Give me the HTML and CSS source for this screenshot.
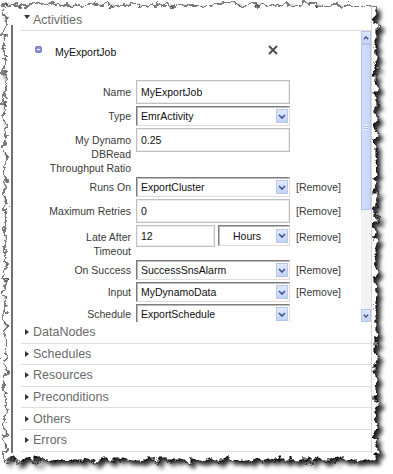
FILE: index.html
```html
<html>

<head>
  <meta name="description" content="Pipeline editor" />
  <link rel="stylesheet" href="styles.css">
</head>

<body>
  <div class="sheet">
    <svg class="paper" width="393" height="474" viewBox="0 0 393 474">
      <defs>
        <filter id="torn" x="-4%" y="-4%" width="110%" height="110%">
          <feTurbulence type="fractalNoise" baseFrequency="0.13" numOctaves="5" seed="11" result="noise" />
          <feDisplacementMap in="SourceGraphic" in2="noise" scale="13" xChannelSelector="R" yChannelSelector="G" result="paper" />
          <feGaussianBlur in="paper" stdDeviation="2" result="blur" />
          <feOffset in="blur" dx="4" dy="4" result="off" />
          <feFlood flood-color="#000" flood-opacity="0.85" />
          <feComposite in2="off" operator="in" result="shadow" />
          <feMerge>
            <feMergeNode in="shadow" />
            <feMergeNode in="paper" />
          </feMerge>
        </filter>
      </defs>
      <rect x="5" y="5" width="371" height="455" fill="#fff" stroke="#000" stroke-width="1" filter="url(#torn)" />
    </svg>

    <div class="window">
      <div class="group-head"><span class="tri-down"></span>Activities</div>

      <div class="scroller">
        <div class="scroll-content">
          <div class="job-head">
            <span class="collapse-icon"></span>
            <span class="job-name">MyExportJob</span>
            <svg class="close" width="10" height="10" viewBox="0 0 10 10">
              <path d="M1 1 L9 9 M9 1 L1 9" stroke="#4b4b4b" stroke-width="1.8" fill="none" />
            </svg>
          </div>

          <div class="form">
            <div class="row text">
              <div class="label">Name</div>
              <input class="input" type="text" value="MyExportJob">
            </div>
            <div class="row">
              <div class="label">Type</div>
              <div class="select"><span>EmrActivity</span><span class="drop"><svg width="8" height="5" viewBox="0 0 8 5"><path d="M1 1 L4 4 L7 1" stroke="#3d5283" stroke-width="1.6" fill="none" /></svg></span></div>
            </div>
            <div class="row text">
              <div class="label">My Dynamo<br>DBRead<br>Throughput Ratio</div>
              <input class="input" type="text" value="0.25">
            </div>
            <div class="row">
              <div class="label">Runs On</div>
              <div class="select"><span>ExportCluster</span><span class="drop"><svg width="8" height="5" viewBox="0 0 8 5"><path d="M1 1 L4 4 L7 1" stroke="#3d5283" stroke-width="1.6" fill="none" /></svg></span></div>
              <div class="remove">[Remove]</div>
            </div>
            <div class="row text">
              <div class="label">Maximum Retries</div>
              <input class="input" type="text" value="0">
              <div class="remove">[Remove]</div>
            </div>
            <div class="row text">
              <div class="label">Late After<br>Timeout</div>
              <input class="input short" type="text" value="12">
              <div class="select units"><span>Hours</span><span class="drop"><svg width="8" height="5" viewBox="0 0 8 5"><path d="M1 1 L4 4 L7 1" stroke="#3d5283" stroke-width="1.6" fill="none" /></svg></span></div>
              <div class="remove">[Remove]</div>
            </div>
            <div class="row">
              <div class="label">On Success</div>
              <div class="select"><span>SuccessSnsAlarm</span><span class="drop"><svg width="8" height="5" viewBox="0 0 8 5"><path d="M1 1 L4 4 L7 1" stroke="#3d5283" stroke-width="1.6" fill="none" /></svg></span></div>
              <div class="remove">[Remove]</div>
            </div>
            <div class="row">
              <div class="label">Input</div>
              <div class="select"><span>MyDynamoData</span><span class="drop"><svg width="8" height="5" viewBox="0 0 8 5"><path d="M1 1 L4 4 L7 1" stroke="#3d5283" stroke-width="1.6" fill="none" /></svg></span></div>
              <div class="remove">[Remove]</div>
            </div>
            <div class="row">
              <div class="label">Schedule</div>
              <div class="select"><span>ExportSchedule</span><span class="drop"><svg width="8" height="5" viewBox="0 0 8 5"><path d="M1 1 L4 4 L7 1" stroke="#3d5283" stroke-width="1.6" fill="none" /></svg></span></div>
            </div>
          </div>
        </div>

        <div class="scrollbar">
          <div class="sb-btn"><svg width="6" height="4" viewBox="0 0 6 4"><path d="M0.8 3.2 L3 1 L5.2 3.2" stroke="#3d5283" stroke-width="1.3" fill="none" /></svg></div>
          <div class="sb-thumb"><span class="grip"></span></div>
          <div class="sb-track"></div>
          <div class="sb-btn"><svg width="6" height="4" viewBox="0 0 6 4"><path d="M0.8 0.8 L3 3 L5.2 0.8" stroke="#3d5283" stroke-width="1.3" fill="none" /></svg></div>
        </div>
      </div>

      <div class="group"><span class="tri-right"></span>DataNodes</div>
      <div class="group"><span class="tri-right"></span>Schedules</div>
      <div class="group"><span class="tri-right"></span>Resources</div>
      <div class="group"><span class="tri-right"></span>Preconditions</div>
      <div class="group"><span class="tri-right"></span>Others</div>
      <div class="group"><span class="tri-right"></span>Errors</div>
    </div>
  </div>
</body>

</html>
```

FILE: styles.css
```css
body {
  margin: 0;
  background: #fff;
  font-family: "Liberation Sans", Arial, sans-serif;
}

.sheet {
  position: relative;
  width: 393px;
  height: 474px;
  overflow: hidden;
}

.paper {
  position: absolute;
  left: 0;
  top: 0;
}

.window {
  position: relative;
  margin: 5px 0 0 11px;
  width: 358px;
  height: 448px;
  padding-left: 2px;
  border-right: 1px solid #d6d6d6;
  background: linear-gradient(#707070, #707070) 0 20px / 2px 428px no-repeat;
}

/* section headers */
.group-head {
  margin-left: 8px;
  height: 20px;
  padding-top: 5px;
  border-bottom: 1px solid #dcdcdc;
  display: flex;
  align-items: center;
  font-size: 12.5px;
  color: #6b6b6b;
}

.tri-down {
  align-self: flex-start;
  margin: 5px 3px 0 3px;
  width: 0;
  height: 0;
  border-top: 4px solid #333;
  border-left: 3px solid transparent;
  border-right: 3px solid transparent;
}

.group {
  margin-left: 8px;
  height: 20.6px;
  border-bottom: 1px solid #dedede;
  display: flex;
  align-items: center;
  padding-left: 4px;
  font-size: 12.5px;
  color: #6b6b6b;
}

.tri-right {
  width: 0;
  height: 0;
  margin-right: 4px;
  border-left: 4px solid #333;
  border-top: 3.5px solid transparent;
  border-bottom: 3.5px solid transparent;
}

/* scrolling activity panel */
.scroller {
  margin-left: 8px;
  height: 291px;
  display: flex;
}

.scroll-content {
  flex: 1;
  overflow: hidden;
}

.job-head {
  margin-top: 11px;
  height: 16px;
  display: flex;
  align-items: center;
  padding-right: 83px;
}

.collapse-icon {
  position: relative;
  margin-left: 14px;
  margin-top: -2px;
  width: 7px;
  height: 7px;
  border-radius: 3px;
  background: #8e93d8;
  box-shadow: inset 0 0 0 1px #7a80c8;
}

.collapse-icon::after {
  content: "";
  position: absolute;
  left: 2px;
  top: 3px;
  width: 3px;
  height: 1px;
  background: #fff;
}

.job-name {
  margin-left: 13px;
  padding-top: 4px;
  font-size: 10.5px;
  color: #111;
}

.close {
  margin-left: auto;
}

.form {
  margin-top: 22px;
}

.row {
  display: flex;
  align-items: flex-start;
  margin-bottom: 2px;
  font-size: 10.5px;
  color: #3a3a3a;
}

.label {
  flex-shrink: 0;
  width: 110px;
  padding-right: 5px;
  padding-top: 3px;
  text-align: right;
  line-height: 14px;
}

.row.text .label {
  padding-top: 5px;
}

.input {
  box-sizing: border-box;
  width: 154px;
  height: 24px;
  margin: 0;
  padding: 0 4px;
  border: 1px solid #c0c0c0;
  box-shadow: inset 0 0 0 1px #ededed;
  font-family: inherit;
  font-size: 10.5px;
  color: #111;
  background: #fff;
  outline: none;
}

.input.short {
  width: 79px;
  height: 22px;
  margin-right: 3px;
}

.select {
  box-sizing: border-box;
  width: 154px;
  height: 20px;
  padding-left: 4px;
  display: flex;
  align-items: center;
  justify-content: space-between;
  border: 1px solid;
  border-color: #7c7c7c #dcdcdc #dcdcdc #7c7c7c;
  box-shadow: inset 1px 1px 0 #bdbdbd;
  color: #111;
  background: #fff;
}

.select.units {
  width: 72px;
  height: 21px;
  padding-left: 14px;
}

.drop {
  width: 12px;
  height: 14px;
  margin-right: 1px;
  box-sizing: border-box;
  border: 1px solid #b7c7ec;
  background: linear-gradient(#e0e9fc, #c3d3f6);
  display: flex;
  align-items: center;
  justify-content: center;
}

.remove {
  margin-left: 6px;
  padding-top: 3px;
  line-height: 14px;
  color: #3a3a3a;
}

.row.text .remove {
  padding-top: 5px;
}

/* fake scrollbar */
.scrollbar {
  width: 10px;
  display: flex;
  flex-direction: column;
  background: #f2f3f6;
}

.sb-btn {
  box-sizing: border-box;
  height: 13px;
  border: 1px solid #b7c7ec;
  background: linear-gradient(#dbe5fc, #c4d4f8);
  display: flex;
  align-items: center;
  justify-content: center;
}

.sb-thumb {
  box-sizing: border-box;
  height: 166px;
  border: 1px solid #b3c3ee;
  background: linear-gradient(90deg, #d3dffc, #c6d5fa);
  display: flex;
  align-items: center;
  justify-content: center;
}

.grip {
  width: 4px;
  height: 5px;
  background: repeating-linear-gradient(#eef2fe 0 1px, #a8b8e6 1px 2px);
}

.sb-track {
  flex: 1;
}
```
